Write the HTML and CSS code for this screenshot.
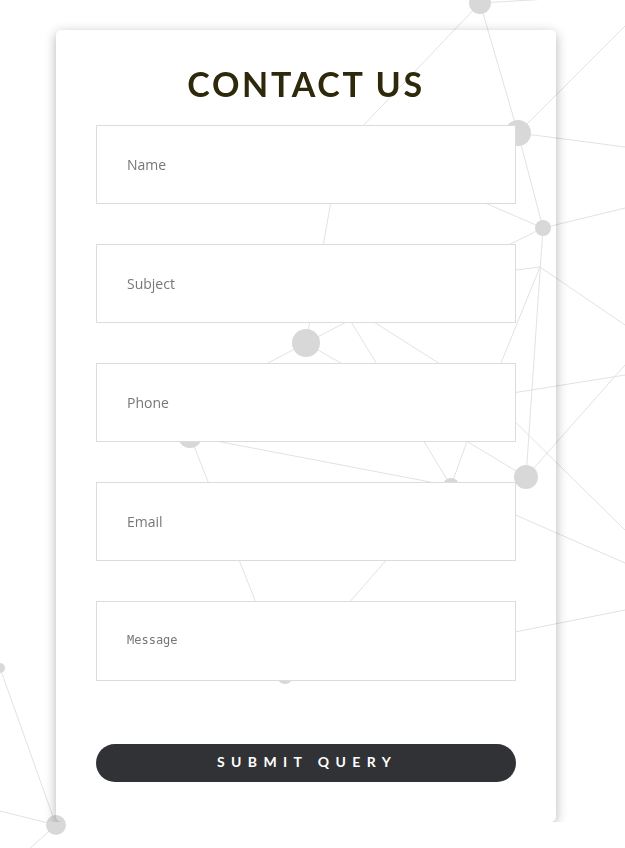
FILE: index.html
```html
<!DOCTYPE html>
<html lang="en">
<head>
    <meta charset="UTF-8">
    <meta name="viewport" content="width=device-width, initial-scale=1.0">
    <title>Contact Us</title>
    <link rel="stylesheet" href="styles.css">
</head>
<body>

    <!-- background network -->
    <svg class="network" width="625" height="848" viewBox="0 0 625 848">
        <g class="links">
            <line x1="480" y1="3" x2="600" y2="-4"/>
            <line x1="480" y1="3" x2="340" y2="150"/>
            <line x1="340" y1="150" x2="306" y2="343"/>
            <line x1="480" y1="3" x2="518" y2="133"/>
            <line x1="518" y1="133" x2="625" y2="26"/>
            <line x1="518" y1="133" x2="625" y2="147"/>
            <line x1="518" y1="133" x2="543" y2="228"/>
            <line x1="543" y1="228" x2="625" y2="208"/>
            <line x1="543" y1="228" x2="455" y2="190"/>
            <line x1="543" y1="228" x2="480" y2="259"/>
            <line x1="543" y1="228" x2="526" y2="477"/>
            <line x1="540" y1="267" x2="625" y2="325"/>
            <line x1="540" y1="267" x2="490" y2="390"/>
            <line x1="540" y1="267" x2="500" y2="272"/>
            <line x1="500" y1="395" x2="625" y2="375"/>
            <line x1="526" y1="477" x2="625" y2="365"/>
            <line x1="505" y1="412" x2="625" y2="530"/>
            <line x1="440" y1="425" x2="526" y2="477"/>
            <line x1="480" y1="405" x2="451" y2="486"/>
            <line x1="350" y1="320" x2="451" y2="486"/>
            <line x1="355" y1="310" x2="470" y2="383"/>
            <line x1="306" y1="343" x2="350" y2="320"/>
            <line x1="306" y1="343" x2="230" y2="383"/>
            <line x1="306" y1="343" x2="370" y2="380"/>
            <line x1="190" y1="436" x2="451" y2="486"/>
            <line x1="190" y1="436" x2="285" y2="676"/>
            <line x1="451" y1="486" x2="285" y2="676"/>
            <line x1="495" y1="506" x2="625" y2="563"/>
            <line x1="500" y1="635" x2="625" y2="610"/>
            <line x1="0" y1="668" x2="56" y2="825"/>
            <line x1="56" y1="825" x2="0" y2="811"/>
            <line x1="56" y1="825" x2="28" y2="850"/>
        </g>
        <g class="nodes">
            <circle cx="480" cy="3" r="11"/>
            <circle cx="518" cy="133" r="13"/>
            <circle cx="543" cy="228" r="8"/>
            <circle cx="306" cy="343" r="14"/>
            <circle cx="190" cy="436" r="12"/>
            <circle cx="526" cy="477" r="12"/>
            <circle cx="451" cy="486" r="8"/>
            <circle cx="285" cy="676" r="8"/>
            <circle cx="56" cy="825" r="10"/>
            <circle cx="0" cy="668" r="5"/>
        </g>
    </svg>

    <div class="contact-card">
        <h2>Contact Us</h2>
        <form class="contact-form">
            <input type="text" placeholder="Name">
            <input type="text" placeholder="Subject">
            <input type="text" placeholder="Phone">
            <input type="email" placeholder="Email">
            <textarea placeholder="Message"></textarea>
            <button type="submit" class="submit-btn">Submit Query</button>
        </form>
    </div>

</body>
</html>
```

FILE: styles.css
```css
body {
    margin: 0;
    padding: 30px 0 0 56px;
    background: #fff;
    font-family: "Open Sans", Arial, sans-serif;
}
.network {
    position: fixed;
    top: 0;
    left: 0;
    z-index: -1;
}
.links line {
    stroke: #e2e2e2;
    stroke-width: 1;
}
.nodes circle {
    fill: #d8d8d8;
}
.contact-card {
    width: 500px;
    height: 792px;
    box-sizing: border-box;
    padding: 0 40px 40px;
    border-radius: 5px;
    box-shadow: 0 3px 12px rgba(0, 0, 0, 0.3);
}
h2 {
    margin: 0;
    padding-top: 32px;
    height: 95px;
    box-sizing: border-box;
    text-align: center;
    font-family: Lato, sans-serif;
    font-size: 34px;
    font-weight: 700;
    line-height: 44px;
    letter-spacing: 2.7px;
    text-transform: uppercase;
    color: #2e290b;
}
.contact-form {
    display: flex;
    flex-direction: column;
    gap: 40px;
}
input,
textarea {
    box-sizing: border-box;
    width: 420px;
    margin: 0;
    border: 1px solid #dcdcdc;
    background: #fff;
    outline: none;
}
input {
    height: 79px;
    padding: 0 30px;
    font-family: "Open Sans", sans-serif;
    font-size: 14px;
}
input::placeholder {
    color: #777;
}
textarea {
    height: 80px;
    padding: 31px 30px;
    resize: none;
    font-family: "DejaVu Sans Mono", monospace;
    font-size: 12px;
}
textarea::placeholder {
    color: #777;
}
.submit-btn {
    margin-top: 23px;
    height: 38px;
    padding: 0 0 4px 2px;
    border: none;
    border-radius: 19px;
    background: #313236;
    color: #fff;
    font-family: Lato, sans-serif;
    font-size: 14px;
    font-weight: 700;
    letter-spacing: 6.4px;
    text-transform: uppercase;
    cursor: pointer;
}
```
